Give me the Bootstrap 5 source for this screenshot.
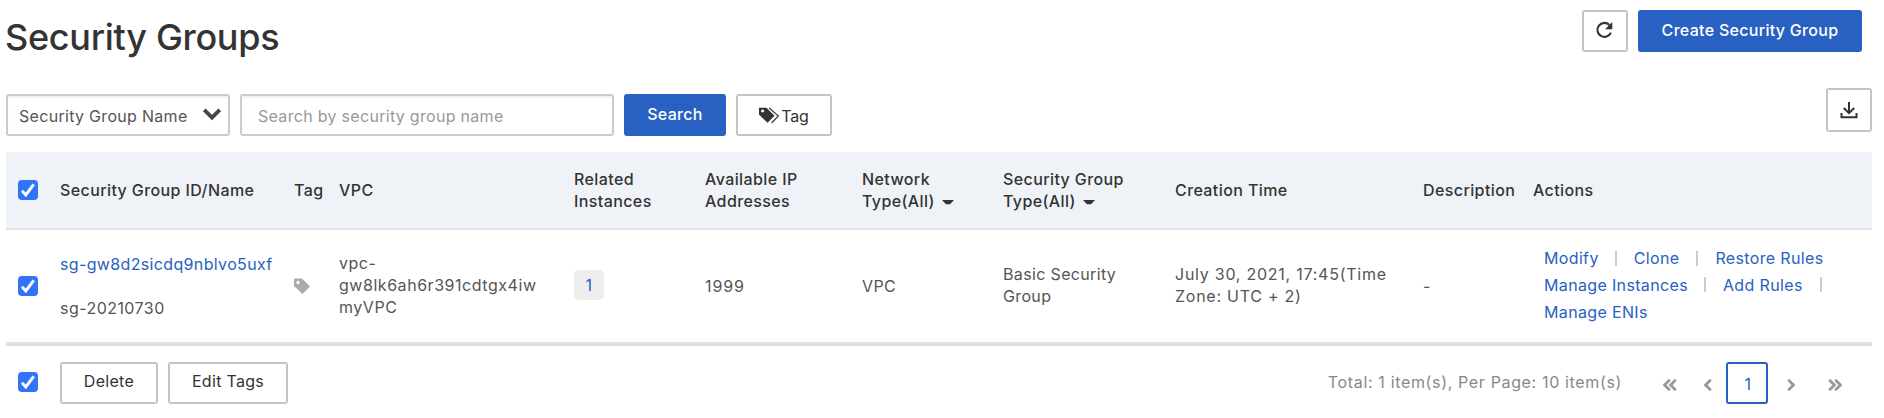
<!DOCTYPE html>
<html lang="en">
<head>
<meta charset="utf-8">
<title>Security Groups</title>
<link rel="stylesheet" href="https://cdn.jsdelivr.net/npm/bootstrap@5.3.0/dist/css/bootstrap.min.css">
<style>
body{font-family:Inter,"Liberation Sans",sans-serif;font-size:16px;line-height:22px;letter-spacing:.35px;color:#555;background:#fff;overflow:hidden}
a{color:#2861c1;text-decoration:none}
.page{padding:10px 12px 0 6px}
.topbar{height:78px}
.title{font-size:36px;line-height:44px;font-weight:450;letter-spacing:-.3px;color:#333;margin:5px 0 0 -1px}
.btn{--bs-btn-border-radius:3px;--bs-btn-border-width:2px;--bs-btn-padding-x:0;--bs-btn-padding-y:0;--bs-btn-line-height:22px;height:42px;letter-spacing:.3px;display:inline-flex;align-items:center;justify-content:center}
.btn-blue{--bs-btn-bg:#2861c1;--bs-btn-color:#fff;--bs-btn-border-color:#2861c1;font-weight:500;padding-bottom:3px}
.btn-plain{--bs-btn-bg:#fff;--bs-btn-color:#333;--bs-btn-border-color:#c1c5ca}
.w-icon{width:46px}.w-create{width:224px}.w-search{width:102px}.w-tag{width:96px}.w-delete{width:98px}.w-edit{width:120px}
.toolbar{height:64px}
.filters{gap:10px;padding-top:6px}
.field{height:42px;border:2px solid #ccc;border-radius:3px;box-shadow:inset 0 2px 2px rgba(0,0,0,.06);background:#fff;letter-spacing:.3px;color:#555;padding-top:2px}
.field-select{width:224px;padding-left:11px;padding-right:7px}
.form-control.field-input{width:374px;padding:1px 16px 0;font-size:16px;line-height:22px}
.field-input::placeholder{color:#999}
.form-check-input{width:20px;height:20px;margin:0;border:0;border-radius:3px;display:block}
.form-check-input:checked{background-color:#3075f6;background-image:url("data:image/svg+xml,%3csvg xmlns='http://www.w3.org/2000/svg' viewBox='0 0 20 20'%3e%3cpath fill='none' stroke='%23fff' stroke-width='3' d='M4 10.8 7.8 15 15.7 4.4'/%3e%3c/svg%3e")}
.groups-wrap{border-bottom:2px solid #dcdcdc}
.groups{table-layout:fixed;width:1866px;margin:0;border-collapse:separate;border-spacing:0;--bs-table-color:#555}
.groups>:not(caption)>*>*{padding:0;border:0;border-bottom:2px solid #e0e4e8;vertical-align:middle;box-shadow:none;background:none}
.groups>thead>tr{height:78px;background:#eff3f8}
.groups>thead>tr>th{font-weight:500;letter-spacing:.4px;color:#333}
.groups>tbody>tr{height:114px}
.groups>tbody>tr>td{color:#555}
.groups>:not(caption)>*>.pick{padding-left:12px}
.groups>:not(caption)>*>.up{padding-bottom:3px}
.groups>:not(caption)>*>.acts{padding-left:11px;padding-bottom:3px}
.caret{display:inline-block;vertical-align:middle;margin-left:2px}
.count{display:inline-flex;width:30px;height:30px;background:#ededed;border-radius:5px;align-items:center;justify-content:center;margin-top:-2px;vertical-align:middle}
.sep{width:2px;height:15px;background:#ccc;flex:none}
.acts .line{height:27px}
.foot{height:60px;padding:16px 0 0 12px;color:#888}
.total{letter-spacing:.65px}
.pager{width:209px;height:42px}
.here{width:42px;height:42px;border:2px solid #2861c1;border-radius:3px;color:#2861c1;padding:2px 0 0 2px}
</style>
</head>
<body>
<main class="page">
  <header class="topbar d-flex justify-content-between align-items-start">
    <h1 class="title">Security Groups</h1>
    <div class="d-flex me-2" style="gap:10px;padding-right:2px">
      <button class="btn btn-plain w-icon" aria-label="Refresh"><svg width="18" height="18" viewBox="0 0 18 18" style="margin:-2px 2px 0 0"><path fill="none" stroke="#333" stroke-width="2.1" d="M14.4 3.9A7 7 0 1 0 15.9 11.6"/><path fill="#333" d="M17.3 1v7.2h-7.2z"/></svg></button>
      <button class="btn btn-blue w-create">Create Security Group</button>
    </div>
  </header>
  <section class="toolbar d-flex justify-content-between align-items-start">
    <div class="filters d-flex">
      <div class="field field-select d-flex align-items-center justify-content-between"><span>Security Group Name</span><svg width="18" height="13" viewBox="0 0 18 13" style="margin-top:-4px"><path fill="none" stroke="#444" stroke-width="3.8" d="M1.3 1.8 9 9.5l7.7-7.7"/></svg></div>
      <input class="form-control field field-input" placeholder="Search by security group name">
      <button class="btn btn-blue w-search">Search</button>
      <button class="btn btn-plain w-tag" style="padding-top:1px"><svg width="21" height="17" viewBox="0 0 21 17" style="margin-right:1px"><path fill="#333" fill-rule="evenodd" d="M0 .8h7.5l8 8-7 7L0 7.5zM3.6 2.6a1.5 1.5 0 1 0 .01 0z"/><path fill="none" stroke="#333" stroke-width="1.1" d="m10.2 1 9.2 8-6.8 7"/></svg><span style="letter-spacing:-.1px">Tag</span></button>
    </div>
    <button class="btn btn-plain w-icon" style="height:44px" aria-label="Download"><svg width="18" height="17" viewBox="0 0 18 17"><path fill="none" stroke="#333" stroke-width="2" d="M9 0v11M3.8 6 9 11.2 14.2 6M1.5 11v4.2h15V11"/></svg></button>
  </section>
  <div class="groups-wrap">
  <table class="table groups">
    <colgroup><col style="width:54px"><col style="width:234px"><col style="width:45px"><col style="width:235px"><col style="width:131px"><col style="width:157px"><col style="width:141px"><col style="width:172px"><col style="width:248px"><col style="width:110px"><col></colgroup>
    <thead><tr>
      <th class="pick"><input class="form-check-input" type="checkbox" checked></th>
      <th>Security Group ID/Name</th><th>Tag</th><th>VPC</th>
      <th>Related<br>Instances</th><th>Available IP<br>Addresses</th>
      <th>Network<br>Type(All) <svg class="caret" width="12" height="5" viewBox="0 0 12 5"><path fill="#333" d="M0 0h12L8 4.2H4z"/></svg></th>
      <th>Security Group<br>Type(All) <svg class="caret" width="12" height="5" viewBox="0 0 12 5"><path fill="#333" d="M0 0h12L8 4.2H4z"/></svg></th>
      <th>Creation Time</th><th>Description</th><th>Actions</th>
    </tr></thead>
    <tbody><tr>
      <td class="pick"><input class="form-check-input" type="checkbox" checked></td>
      <td><a href="#">sg-gw8d2sicdq9nblvo5uxf</a><br><br><span style="letter-spacing:.45px">sg-20210730</span></td>
      <td><svg class="d-block" width="16" height="16" viewBox="0 0 16 16"><path fill="#aaa" fill-rule="evenodd" d="M0 .5h8l8 8L8.5 16 0 8zM4 2.8a1.7 1.7 0 1 0 .01 0z"/></svg></td>
      <td class="up" style="letter-spacing:.54px">vpc-<br>gw8lk6ah6r391cdtgx4iw<br>myVPC</td>
      <td><a href="#" class="count">1</a></td>
      <td style="letter-spacing:.9px">1999</td><td>VPC</td>
      <td class="up">Basic Security<br>Group</td>
      <td class="up" style="letter-spacing:.75px">July 30, 2021, 17:45(Time<br>Zone: UTC + 2)</td>
      <td>-</td>
      <td class="acts">
        <div class="d-flex line"><a href="#">Modify</a><span class="sep" style="margin:4px 17px 0 16px"></span><a href="#">Clone</a><span class="sep" style="margin:4px 17px 0"></span><a href="#">Restore Rules</a></div>
        <div class="d-flex line"><a href="#">Manage Instances</a><span class="sep" style="margin:3px 17px 0 16px"></span><a href="#">Add Rules</a><span class="sep" style="margin:3px 0 0 17px"></span></div>
        <div><a href="#">Manage ENIs</a></div>
      </td>
    </tr></tbody>
  </table>
  </div>
  <footer class="foot d-flex">
    <input class="form-check-input" type="checkbox" checked style="margin:10px 22px 0 0">
    <div class="d-flex" style="gap:10px"><button class="btn btn-plain w-delete pb-1">Delete</button><button class="btn btn-plain w-edit pb-1">Edit Tags</button></div>
    <div class="d-flex ms-auto">
      <span class="total" style="margin:9px 41px 0 0">Total: 1 item(s), Per Page: 10 item(s)</span>
      <nav class="pager d-flex align-items-center">
        <svg width="14" height="12" viewBox="0 0 14 12" style="margin-top:3px"><path fill="none" stroke="#999" stroke-width="2.8" d="M6.8.8 1.6 6l5.2 5.2M12.8.8 7.6 6l5.2 5.2"/></svg>
        <svg width="8" height="12" viewBox="0 0 8 12" style="margin:3px 14px 0 27px"><path fill="none" stroke="#999" stroke-width="2.8" d="M6.8.8 1.6 6l5.2 5.2"/></svg>
        <span class="here d-flex align-items-center justify-content-center">1</span>
        <svg width="8" height="12" viewBox="0 0 8 12" style="margin:3px 33px 0 19px"><path fill="none" stroke="#999" stroke-width="2.8" d="M1.2.8 6.4 6l-5.2 5.2"/></svg>
        <svg width="14" height="12" viewBox="0 0 14 12" style="margin-top:3px"><path fill="none" stroke="#999" stroke-width="2.8" d="M1.2.8 6.4 6l-5.2 5.2M7.2.8 12.4 6l-5.2 5.2"/></svg>
      </nav>
    </div>
  </footer>
</main>
<script src="https://cdn.jsdelivr.net/npm/bootstrap@5.3.0/dist/js/bootstrap.bundle.min.js"></script>
</body>
</html>
